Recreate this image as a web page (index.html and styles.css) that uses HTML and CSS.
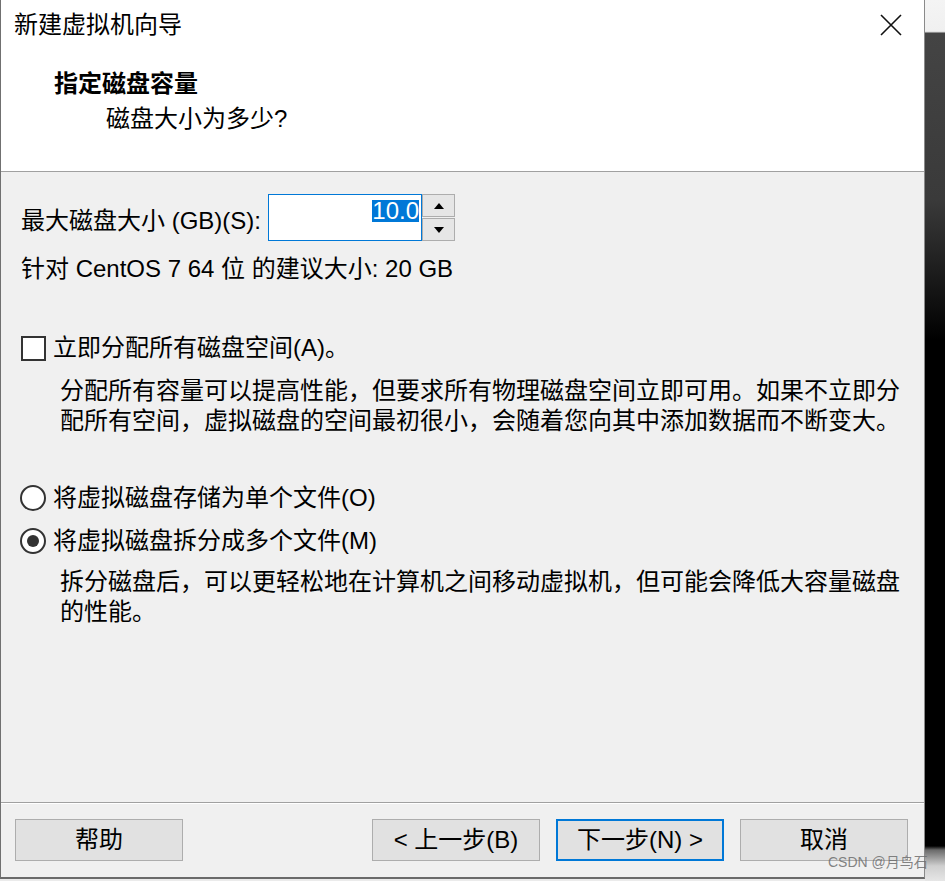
FILE: index.html
```html
<!DOCTYPE html>
<html lang="zh-CN">
<head>
<meta charset="utf-8">
<title>新建虚拟机向导</title>
<link rel="stylesheet" href="styles.css">
</head>
<body>
<div class="screen">
  <div class="window">
    <header class="head">
      <div class="titlebar">
        <span class="title">新建虚拟机向导</span>
        <svg class="close" width="22" height="22" viewBox="0 0 22 22" aria-label="关闭">
          <path d="M1 1 L21 21 M21 1 L1 21" stroke="#111" stroke-width="1.6" fill="none"/>
        </svg>
      </div>
      <div class="head-text">
        <div class="head-title">指定磁盘容量</div>
        <div class="head-sub">磁盘大小为多少?</div>
      </div>
    </header>

    <main class="content">
      <div class="size-row">
        <label class="size-label">最大磁盘大小 (GB)(S):</label>
        <div class="spin">
          <div class="spin-input"><span class="sel">10.0</span></div>
          <div class="spin-btns">
            <div class="spin-btn"><span class="tri-up"></span></div>
            <div class="spin-btn"><span class="tri-down"></span></div>
          </div>
        </div>
      </div>
      <div class="recommend">针对 CentOS 7 64 位 的建议大小: 20 GB</div>

      <div class="option check-row">
        <span class="checkbox"></span>
        <span>立即分配所有磁盘空间(A)。</span>
      </div>
      <p class="desc">分配所有容量可以提高性能，但要求所有物理磁盘空间立即可用。如果不立即分配所有空间，虚拟磁盘的空间最初很小，会随着您向其中添加数据而不断变大。</p>

      <div class="option radio-row first">
        <span class="radio"></span>
        <span>将虚拟磁盘存储为单个文件(O)</span>
      </div>
      <div class="option radio-row second">
        <span class="radio on"></span>
        <span>将虚拟磁盘拆分成多个文件(M)</span>
      </div>
      <p class="desc desc-split">拆分磁盘后，可以更轻松地在计算机之间移动虚拟机，但可能会降低大容量磁盘的性能。</p>
    </main>

    <footer class="foot">
      <button class="btn">帮助</button>
      <div class="foot-right">
        <button class="btn">&lt; 上一步(B)</button>
        <button class="btn btn-default">下一步(N) &gt;</button>
        <button class="btn">取消</button>
      </div>
    </footer>
  </div>
  <div class="backdrop"></div>
</div>
<div class="watermark">CSDN @月鸟石</div>
</body>
</html>
```

FILE: styles.css
```css
html, body {
  margin: 0;
  padding: 0;
}

body {
  width: 945px;
  height: 881px;
  overflow: hidden;
  background: #ebebeb;
  position: relative;
  font-family: "Liberation Sans", "Noto Sans CJK SC", sans-serif;
  font-size: 24px;
  color: #000;
}

.screen {
  display: flex;
  height: 881px;
}

.window {
  width: 923px;
  height: 877px;
  border-left: 1px solid #707070;
  border-right: 1px solid #8a8a8a;
  border-bottom: 2px solid #6a6a6a;
  display: flex;
  flex-direction: column;
  background: #f0f0f0;
}

.backdrop {
  flex: 1;
  background: linear-gradient(to bottom,
    #f4f4f4 0, #f0f0f0 31px, #d8d8d8 32px, #444 33px,
    #3a3a3a 200px, #111 300px, #000 340px,
    #000 846px, #6a6a6a 850px, #cfcfcf 866px, #e6e6e6 881px);
}

/* header */
.head {
  height: 171px;
  background: #fff;
  border-bottom: 1px solid #a0a0a0;
}

.titlebar {
  height: 50px;
  display: flex;
  align-items: center;
  justify-content: space-between;
  padding: 0 22px 0 13px;
}

.title {
  line-height: 50px;
}

.close {
  display: block;
  margin-top: -1px;
}

.head-text {
  padding: 16px 0 0 53px;
}

.head-title {
  font-weight: 700;
  line-height: 35px;
}

.head-sub {
  line-height: 35px;
  padding-left: 52px;
}

/* body */
.content {
  flex: 1;
  padding: 22px 12px 0 20px;
}

.size-row {
  display: flex;
  align-items: flex-start;
  gap: 7px;
  height: 47px;
}

.size-label {
  line-height: 30px;
  margin-top: 12px;
}

.spin {
  display: flex;
}

.spin-input {
  border: 1px solid #0078d7;
  background: #fff;
  display: flex;
  justify-content: flex-end;
  align-items: flex-start;
  padding: 5px 2px 0 0;
  box-sizing: border-box;
  width: 154px;
  height: 47px;
}

.sel {
  display: block;
  line-height: 22px;
  background: #0078d7;
  color: #fff;
}

.spin-btns {
  display: flex;
  flex-direction: column;
  gap: 1px;
  width: 33px;
}

.spin-btn {
  height: 23px;
  box-sizing: border-box;
  border: 1px solid #adadad;
  background: #e6e6e6;
  display: flex;
  align-items: center;
  justify-content: center;
}

.tri-up,
.tri-down {
  width: 0;
  height: 0;
  border-left: 5px solid transparent;
  border-right: 5px solid transparent;
}

.tri-up {
  border-bottom: 6px solid #000;
}

.tri-down {
  border-top: 6px solid #000;
}

.recommend {
  margin-top: 13px;
  line-height: 30px;
}

.option {
  display: flex;
  align-items: center;
  gap: 7px;
  line-height: 30px;
}

.check-row {
  margin-top: 49px;
}

.checkbox {
  width: 25px;
  height: 25px;
  box-sizing: border-box;
  border: 2px solid #333;
  background: #fff;
  flex: none;
}

.radio {
  width: 26px;
  height: 26px;
  box-sizing: border-box;
  border: 2px solid #333;
  border-radius: 50%;
  background: #fff;
  margin-left: -1px;
  flex: none;
  display: flex;
  align-items: center;
  justify-content: center;
}

.radio.on::after {
  content: "";
  width: 12px;
  height: 12px;
  border-radius: 50%;
  background: #333;
}

.radio-row.first {
  margin-top: 47px;
}

.radio-row.second {
  margin-top: 13px;
}

.desc {
  margin: 13px 0 0 39px;
  line-height: 30px;
}

.desc-split {
  margin-top: 11px;
}

/* footer */
.foot {
  height: 75px;
  box-sizing: border-box;
  border-top: 1px solid #a0a0a0;
  box-shadow: inset 0 1px 0 #fff;
  padding: 16px 16px 0 14px;
  display: flex;
  justify-content: space-between;
  align-items: flex-start;
}

.foot-right {
  display: flex;
  gap: 16px;
}

.btn {
  width: 168px;
  height: 42px;
  box-sizing: border-box;
  border: 1px solid #adadad;
  background: #e1e1e1;
  font-family: inherit;
  font-size: 24px;
  color: #000;
  padding: 0;
  line-height: 40px;
  margin: 0;
}

.btn-default {
  border: 2px solid #0078d7;
  line-height: 38px;
}

.watermark {
  position: absolute;
  left: 828px;
  top: 853px;
  font-size: 14px;
  line-height: 18px;
  color: rgba(110, 110, 110, 0.85);
  white-space: nowrap;
}
```
